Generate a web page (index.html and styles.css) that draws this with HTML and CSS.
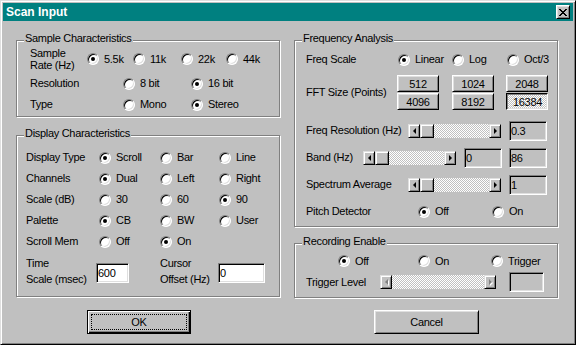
FILE: index.html
```html
<!DOCTYPE html>
<html lang="en">
<head>
    <meta charset="UTF-8">
    <title>Scan Input</title>
    <link rel="stylesheet" href="styles.css">
</head>
<body>
    <div class="window">
        <div class="titlebar">
            <span class="title">Scan Input</span>
            <button class="close" type="button" aria-label="Close">
                <svg width="8" height="7" viewBox="0 0 8 7" shape-rendering="crispEdges"><path fill="#000" d="M0 0h2v1H0zM6 0h2v1H6zM1 1h2v1H1zM5 1h2v1H5zM2 2h4v1H2zM3 3h2v1H3zM2 4h4v1H2zM1 5h2v1H1zM5 5h2v1H5zM0 6h2v1H0zM6 6h2v1H6z"/></svg>
            </button>
        </div>

        <div class="columns">
            <div class="column">
                <div class="group sample">
                    <span class="group-title">Sample Characteristics</span>
                    <div class="row rate">
                        <span class="label lines">Sample<br>Rate (Hz)</span>
                        <span class="opt"><span class="radio checked"></span>5.5k</span>
                        <span class="opt"><span class="radio"></span>11k</span>
                        <span class="opt"><span class="radio"></span>22k</span>
                        <span class="opt"><span class="radio"></span>44k</span>
                    </div>
                    <div class="row res">
                        <span class="label">Resolution</span>
                        <span class="opt"><span class="radio"></span>8 bit</span>
                        <span class="opt"><span class="radio checked"></span>16 bit</span>
                    </div>
                    <div class="row res">
                        <span class="label">Type</span>
                        <span class="opt"><span class="radio"></span>Mono</span>
                        <span class="opt"><span class="radio checked"></span>Stereo</span>
                    </div>
                </div>

                <div class="group display">
                    <span class="group-title">Display Characteristics</span>
                    <div class="row drow">
                        <span class="label">Display Type</span>
                        <span class="opt"><span class="radio checked"></span>Scroll</span>
                        <span class="opt"><span class="radio"></span>Bar</span>
                        <span class="opt"><span class="radio"></span>Line</span>
                    </div>
                    <div class="row drow">
                        <span class="label">Channels</span>
                        <span class="opt"><span class="radio checked"></span>Dual</span>
                        <span class="opt"><span class="radio"></span>Left</span>
                        <span class="opt"><span class="radio"></span>Right</span>
                    </div>
                    <div class="row drow">
                        <span class="label">Scale (dB)</span>
                        <span class="opt"><span class="radio"></span>30</span>
                        <span class="opt"><span class="radio"></span>60</span>
                        <span class="opt"><span class="radio checked"></span>90</span>
                    </div>
                    <div class="row drow">
                        <span class="label">Palette</span>
                        <span class="opt"><span class="radio checked"></span>CB</span>
                        <span class="opt"><span class="radio"></span>BW</span>
                        <span class="opt"><span class="radio"></span>User</span>
                    </div>
                    <div class="row drow">
                        <span class="label">Scroll Mem</span>
                        <span class="opt"><span class="radio"></span>Off</span>
                        <span class="opt"><span class="radio checked"></span>On</span>
                    </div>
                    <div class="row time">
                        <span class="label">Time<br>Scale (msec)</span>
                        <span class="edit w33">600</span>
                        <span class="label">Cursor<br>Offset (Hz)</span>
                        <span class="edit w47">0</span>
                    </div>
                </div>
            </div>

            <div class="column">
                <div class="group freq">
                    <span class="group-title">Frequency Analysis</span>
                    <div class="row fscale">
                        <span class="label">Freq Scale</span>
                        <span class="opt"><span class="radio checked"></span>Linear</span>
                        <span class="opt"><span class="radio"></span>Log</span>
                        <span class="opt"><span class="radio"></span>Oct/3</span>
                    </div>
                    <div class="fft">
                        <span class="label">FFT Size (Points)</span>
                        <button class="btn key" type="button">512</button>
                        <button class="btn key" type="button">1024</button>
                        <button class="btn key" type="button">2048</button>
                        <button class="btn key" type="button">4096</button>
                        <button class="btn key" type="button">8192</button>
                        <button class="btn key down" type="button">16384</button>
                    </div>
                    <div class="row fres">
                        <span class="label">Freq Resolution (Hz)</span>
                        <div class="scroll"><span class="arrow left"></span><span class="thumb"></span><span class="arrow right"></span></div>
                        <span class="edit ro w38">0.3</span>
                    </div>
                    <div class="row band">
                        <span class="label">Band (Hz)</span>
                        <div class="scroll"><span class="arrow left"></span><span class="thumb"></span><span class="arrow right"></span></div>
                        <span class="edit ro w38">0</span>
                        <span class="edit ro w38">86</span>
                    </div>
                    <div class="row spec">
                        <span class="label">Spectrum Average</span>
                        <div class="scroll"><span class="arrow left"></span><span class="thumb"></span><span class="arrow right"></span></div>
                        <span class="edit ro w38">1</span>
                    </div>
                    <div class="row pitch">
                        <span class="label">Pitch Detector</span>
                        <span class="opt"><span class="radio checked"></span>Off</span>
                        <span class="opt"><span class="radio"></span>On</span>
                    </div>
                </div>

                <div class="group record">
                    <span class="group-title">Recording Enable</span>
                    <div class="row rmode">
                        <span class="opt"><span class="radio checked"></span>Off</span>
                        <span class="opt"><span class="radio"></span>On</span>
                        <span class="opt"><span class="radio"></span>Trigger</span>
                    </div>
                    <div class="row trig">
                        <span class="label">Trigger Level</span>
                        <div class="scroll long off"><span class="arrow left"></span><span class="arrow right"></span></div>
                        <span class="edit ro w35"></span>
                    </div>
                </div>
            </div>
        </div>

        <div class="buttons">
            <div class="cell"><button class="btn push ok" type="button"><span class="focus">OK</span></button></div>
            <div class="cell"><button class="btn push cancel" type="button">Cancel</button></div>
        </div>
    </div>
</body>
</html>
```

FILE: styles.css
```css
* {
    box-sizing: border-box;
}
body {
    margin: 0;
    background: #c0c0c0;
}
.window {
    width: 576px;
    height: 345px;
    padding: 2px;
    background: #c0c0c0;
    border: 1px solid;
    border-color: #dfdfdf #000 #000 #dfdfdf;
    box-shadow: inset 1px 1px 0 #fff, inset -1px -1px 0 #808080;
    font-family: "Liberation Sans", Arial, sans-serif;
    font-size: 11px;
    letter-spacing: -0.3px;
    color: #000;
}
.titlebar {
    height: 18px;
    display: flex;
    align-items: center;
    justify-content: space-between;
    padding-left: 3px;
    background: #008080;
}
.title {
    color: #fff;
    font-weight: bold;
    font-size: 12px;
    letter-spacing: 0;
}
.close {
    width: 14px;
    height: 14px;
    margin-right: 3px;
    padding: 0;
    display: flex;
    align-items: center;
    justify-content: center;
    background: #c0c0c0;
    border: 1px solid;
    border-color: #fff #000 #000 #fff;
    box-shadow: inset 1px 1px 0 #dfdfdf, inset -1px -1px 0 #808080;
}

/* layout */
.columns {
    display: flex;
    align-items: flex-start;
    gap: 14px;
    padding: 19px 0 0 13px;
}
.column {
    width: 264px;
}
.buttons {
    display: flex;
    gap: 14px;
    padding-left: 13px;
    margin-top: 12px;
}
.cell {
    width: 264px;
}

/* group boxes */
.group {
    position: relative;
    border: 1px solid #808080;
    box-shadow: 1px 1px 0 #fff, inset 1px 1px 0 #fff;
}
.group-title {
    position: absolute;
    top: -9px;
    left: 7px;
    padding: 0 1px;
    line-height: 13px;
    background: #c0c0c0;
    white-space: nowrap;
}
.sample {
    height: 77px;
    padding: 6px 0 0 13px;
}
.display {
    margin-top: 18px;
    height: 162px;
    padding: 11px 0 0 9px;
}
.freq {
    height: 187px;
    padding: 8px 0 0 11px;
}
.record {
    margin-top: 16px;
    height: 55px;
    padding: 7px 0 0 11px;
}

/* rows */
.row {
    display: grid;
    align-items: center;
    height: 21px;
}
.label {
    white-space: nowrap;
    line-height: 13px;
}
.lines {
    line-height: 12px;
}
.rate {
    height: 24px;
    margin-bottom: 2px;
    grid-template-columns: 57px 46px 48px 45px auto;
}
.res {
    grid-template-columns: 93px 68px auto;
}
.drow {
    grid-template-columns: 73px 61px 59px auto;
}
.time {
    height: 32px;
    margin-top: 3px;
    align-items: start;
    grid-template-columns: 70px 64px 58px auto;
}
.time .label {
    line-height: 16px;
}
.time .edit {
    margin-top: 8px;
}
.fscale {
    grid-template-columns: 92px 54px 55px auto;
}
.fft {
    display: grid;
    margin-top: 5px;
    grid-template-columns: 91px 55px 54px 42px;
    grid-template-rows: 17px 17px;
    row-gap: 1px;
}
.fft .label {
    grid-row: 1 / 3;
    align-self: center;
}
.fres {
    margin-top: 10px;
    grid-template-columns: 102px 101px 38px;
}
.band {
    margin-top: 6px;
    grid-template-columns: 57px 101px 45px 38px;
}
.spec {
    margin-top: 6px;
    grid-template-columns: 102px 101px 38px;
}
.pitch {
    margin-top: 6px;
    grid-template-columns: 112px 74px auto;
}
.rmode {
    height: 20px;
    padding-left: 32px;
    grid-template-columns: 80px 73px auto;
}
.trig {
    height: 20px;
    margin-top: 1px;
    grid-template-columns: 74px 129px 35px;
}

/* radio buttons */
.opt {
    display: flex;
    align-items: center;
    gap: 5px;
    line-height: 13px;
    white-space: nowrap;
}
.radio {
    position: relative;
    flex: none;
    width: 12px;
    height: 12px;
    border-radius: 50%;
    border: 1px solid;
    border-color: #808080 #fff #fff #808080;
    background: #fff;
    box-shadow: inset 1px 1px 0 #000, inset -1px -1px 0 #dfdfdf;
}
.radio.checked::after {
    content: "";
    position: absolute;
    left: 3px;
    top: 3px;
    width: 4px;
    height: 4px;
    border-radius: 50%;
    background: #000;
}

/* edit boxes */
.edit {
    display: block;
    height: 20px;
    padding-left: 1px;
    line-height: 18px;
    background: #fff;
    border: 1px solid;
    border-color: #808080 #fff #fff #808080;
    box-shadow: inset 1px 1px 0 #000, inset -1px -1px 0 #dfdfdf;
}
.edit.ro {
    background: #c0c0c0;
}
.w33 { width: 33px; }
.w35 { width: 35px; }
.w38 { width: 38px; }
.w47 { width: 47px; }

/* buttons */
.btn {
    display: flex;
    align-items: center;
    justify-content: center;
    padding: 0;
    font: inherit;
    letter-spacing: inherit;
    color: #000;
    background: #c0c0c0;
    border: 1px solid;
    border-color: #fff #000 #000 #fff;
    box-shadow: inset 1px 1px 0 #dfdfdf, inset -1px -1px 0 #808080;
}
.key {
    width: 42px;
    height: 17px;
}
.key.down {
    padding: 1px 0 0 1px;
    border-color: #000 #fff #fff #000;
    box-shadow: inset 1px 1px 0 #808080, inset -1px -1px 0 #dfdfdf;
    background: repeating-conic-gradient(#fff 0 25%, #c0c0c0 0 50%) 0 0 / 2px 2px;
}
.push {
    width: 104px;
    height: 24px;
}
.ok {
    margin-left: 71px;
    border-color: #000;
    box-shadow: inset 1px 1px 0 #fff, inset -1px -1px 0 #000, inset -2px -2px 0 #808080;
}
.focus {
    flex: 1;
    align-self: stretch;
    margin: 3px;
    display: flex;
    align-items: center;
    justify-content: center;
    border: 1px dotted #000;
}
.cancel {
    width: 105px;
    margin-left: 80px;
}

/* scrollbars */
.scroll {
    display: flex;
    width: 93px;
    height: 14px;
    background: repeating-conic-gradient(#fff 0 25%, #c0c0c0 0 50%) 0 0 / 2px 2px;
}
.scroll.long {
    width: 116px;
}
.arrow, .thumb {
    display: flex;
    align-items: center;
    justify-content: center;
    height: 14px;
    background: #c0c0c0;
    border: 1px solid;
    border-color: #dfdfdf #000 #000 #dfdfdf;
    box-shadow: inset 1px 1px 0 #fff, inset -1px -1px 0 #808080;
}
.arrow {
    width: 12px;
}
.thumb {
    width: 14px;
}
.arrow.right {
    margin-left: auto;
}
.arrow::before {
    content: "";
    border: 3px solid transparent;
}
.arrow.left::before {
    border-left-width: 0;
    border-right-color: #000;
}
.arrow.right::before {
    border-right-width: 0;
    border-left-color: #000;
}
.scroll.off .arrow.left::before {
    border-right-color: #808080;
    filter: drop-shadow(1px 1px 0 #fff);
}
.scroll.off .arrow.right::before {
    border-left-color: #808080;
    filter: drop-shadow(1px 1px 0 #fff);
}
```
